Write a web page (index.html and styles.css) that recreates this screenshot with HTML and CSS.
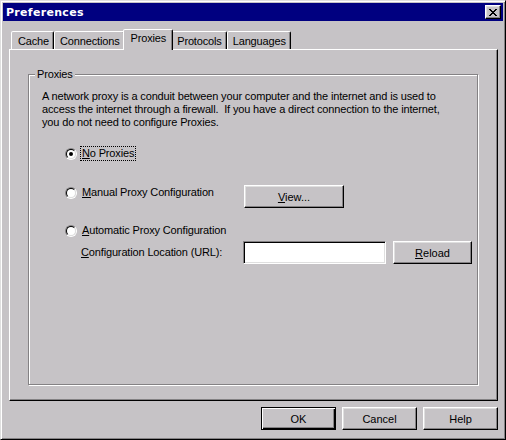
FILE: index.html
```html
<!DOCTYPE html>
<html>
<head>
<meta charset="utf-8">
<link rel="stylesheet" href="styles.css">
</head>
<body>
<div class="window">
  <div class="titlebar">
    <span class="title">Preferences</span>
    <button class="close" aria-label="Close">
      <svg width="8" height="7" viewBox="0 0 8 7" shape-rendering="crispEdges"><path d="M0 0h2v1H0zM6 0h2v1H6zM1 1h2v1H1zM5 1h2v1H5zM2 2h4v1H2zM3 3h2v1H3zM2 4h4v1H2zM1 5h2v1H1zM5 5h2v1H5zM0 6h2v1H0zM6 6h2v1H6z" fill="#000"/></svg>
    </button>
  </div>
  <div class="body">
    <div class="tabs">
      <div class="tab">Cache</div>
      <div class="tab">Connections</div>
      <div class="tab active">Proxies</div>
      <div class="tab">Protocols</div>
      <div class="tab">Languages</div>
    </div>
    <div class="panel">
      <fieldset class="group">
        <legend>Proxies</legend>
        <p class="desc">A network proxy is a conduit between your computer and the internet and is used to<br>access the internet through a firewall.&nbsp; If you have a direct connection to the internet,<br>you do not need to configure Proxies.</p>
        <div class="options">
          <div class="row row-1">
            <div class="choice">
              <span class="radio"><span class="radio-in"><span class="dot"></span></span></span>
              <span class="label focus"><u>N</u>o Proxies</span>
            </div>
          </div>
          <div class="row row-2">
            <div class="choice">
              <span class="radio"><span class="radio-in"></span></span>
              <span class="label"><u>M</u>anual Proxy Configuration</span>
            </div>
            <button class="btn view"><u>V</u>iew...</button>
          </div>
          <div class="row row-3">
            <div class="choice">
              <span class="radio"><span class="radio-in"></span></span>
              <span class="label"><u>A</u>utomatic Proxy Configuration</span>
            </div>
          </div>
          <div class="row row-4">
            <div class="choice indent"><span class="label"><u>C</u>onfiguration Location (URL):</span></div>
            <span class="field"></span>
            <button class="btn reload"><u>R</u>eload</button>
          </div>
        </div>
      </fieldset>
    </div>
    <div class="actions">
      <button class="btn default">OK</button>
      <button class="btn">Cancel</button>
      <button class="btn">Help</button>
    </div>
  </div>
</div>
</body>
</html>
```
FILE: styles.css
```css
* { box-sizing: border-box; }

body {
  margin: 0;
  background: #c6c3c6;
  font: 11px/13px "Liberation Sans", Arial, sans-serif;
  letter-spacing: -0.15px;
  color: #000;
}

.window {
  width: 506px;
  height: 440px;
  background: #c6c3c6;
  border: 1px solid;
  border-color: #dfdfdf #000 #000 #dfdfdf;
  box-shadow: inset 1px 1px #fff, inset -1px -1px #848284;
  padding: 2px;
  display: flex;
  flex-direction: column;
}

.titlebar {
  height: 18px;
  flex: none;
  background: #000080;
  color: #fff;
  display: flex;
  align-items: center;
  justify-content: space-between;
  padding: 0 2px 0 3px;
}

.title {
  font: bold 11px/13px "DejaVu Sans", sans-serif;
  letter-spacing: 0.3px;
}

.close {
  width: 16px;
  height: 14px;
  padding: 0;
  border: 1px solid;
  border-color: #fff #000 #000 #fff;
  box-shadow: inset -1px -1px #848284, inset 1px 1px #dfdfdf;
  background: #c6c3c6;
  display: flex;
  align-items: center;
  justify-content: center;
}

.close svg { display: block; margin-top: 1px; }

.body {
  flex: 1;
  display: flex;
  flex-direction: column;
  padding: 8px 5px 0 6px;
}

.tabs {
  display: flex;
  align-items: flex-end;
  height: 20px;
  padding-left: 2px;
  position: relative;
  z-index: 1;
}

.tab {
  height: 18px;
  padding: 3px 4px 0 5px;
  background: #c6c3c6;
  border: 1px solid;
  border-bottom: 0;
  border-color: #fff #000 transparent #fff;
  box-shadow: inset -1px 0 #848284;
  border-radius: 2px 2px 0 0;
  white-space: nowrap;
}

.tab:first-child { padding-left: 6px; }

.tab.active {
  height: 21px;
  margin: 0 -2px -1px;
  padding: 2px 6px 0 7px;
  position: relative;
  z-index: 2;
}

.panel {
  height: 352px;
  flex: none;
  border: 1px solid;
  border-color: #fff #000 #000 #fff;
  box-shadow: inset -1px -1px #848284;
  padding: 18px 19px 15px 18px;
  display: flex;
  flex-direction: column;
}

.group {
  flex: 1;
  margin: 0;
  min-width: 0;
  border: 1px solid #848284;
  box-shadow: inset 1px 1px #fff, 1px 1px #fff;
  padding: 9px 0 0 13px;
}

.group legend {
  padding: 0 2px;
  margin-left: -7px;
  background: #c6c3c6;
  line-height: 13px;
}

.desc {
  margin: 0;
  white-space: nowrap;
}

.options {
  margin-left: 23px;
  display: flex;
  flex-direction: column;
}

.row {
  display: flex;
  align-items: flex-start;
}

.row-1 { margin-top: 17px; }
.row-2 { margin-top: 24px; }
.row-3 { margin-top: 15px; }
.row-4 { margin-top: 3px; align-items: center; }

.choice {
  width: 178px;
  flex: none;
  display: flex;
  align-items: center;
}

.choice.indent { padding-left: 14px; }

.radio {
  width: 12px;
  height: 12px;
  flex: none;
  border-radius: 50%;
  border: 1px solid;
  border-color: #848284 #fff #fff #848284;
  display: flex;
}

.radio-in {
  flex: 1;
  border-radius: 50%;
  border: 1px solid;
  border-color: #000 #dfdfdf #dfdfdf #000;
  background: #fff;
  display: flex;
  align-items: center;
  justify-content: center;
}

.dot {
  width: 4px;
  height: 4px;
  border-radius: 50%;
  background: #000;
}

.label {
  margin-left: 3px;
  padding: 0 1px;
  border: 1px solid transparent;
  white-space: nowrap;
}

.indent .label { margin-left: 0; }

.label.focus { border: 1px dotted #000; }

.btn {
  font: inherit;
  color: #000;
  height: 23px;
  flex: none;
  padding: 1px 0 0;
  background: #c6c3c6;
  border: 1px solid;
  border-color: #fff #000 #000 #fff;
  box-shadow: inset -1px -1px #848284, inset 1px 1px #dfdfdf;
}

.view { width: 100px; margin-left: 1px; }

.field {
  width: 143px;
  height: 23px;
  flex: none;
  background: #fff;
  border: 1px solid;
  border-color: #848284 #fff #fff #848284;
  box-shadow: inset 1px 1px #000, inset -1px -1px #dfdfdf;
}

.reload { width: 79px; margin-left: 7px; }

.actions {
  display: flex;
  justify-content: flex-end;
  gap: 6px;
  margin-top: 6px;
}

.actions .btn { width: 75px; }

.btn.default {
  border-color: #000;
  box-shadow: inset 1px 1px #fff, inset -1px -1px #000, inset -2px -2px #848284;
}
```
